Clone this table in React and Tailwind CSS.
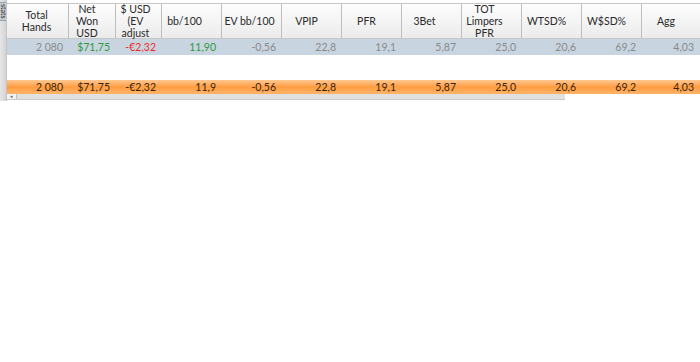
const cols = [
  { w: 'w-[62px]', head: ['Total', 'Hands'], hp: 'pl-[8px] pr-[10px]' },
  { w: 'w-[47px]', head: ['Net', 'Won', 'USD'], hp: 'pl-[2px] pr-[12px]' },
  { w: 'w-[46px]', head: ['$ USD', '(EV', 'adjust'], hp: 'pl-[4px] pr-[10px]' },
  { w: 'w-[60px]', head: ['bb/100'], hp: 'pr-[14px]' },
  { w: 'w-[60px]', head: ['EV bb/100'], hp: 'pl-[4px] pr-[8px]' },
  { w: 'w-[60px]', head: ['VPIP'], hp: 'pl-[2px] pr-[12px]' },
  { w: 'w-[60px]', head: ['PFR'], hp: 'pl-[2px] pr-[12px]' },
  { w: 'w-[60px]', head: ['3Bet'], hp: 'pr-[14px]' },
  { w: 'w-[60px]', head: ['TOT', 'Limpers', 'PFR'], hp: 'pr-[14px]' },
  { w: 'w-[60px]', head: ['WTSD%'], hp: 'pl-[2px] pr-[12px]' },
  { w: 'w-[60px]', head: ['W$SD%'], hp: 'pl-[2px] pr-[12px]' },
  { w: 'w-[58px]', head: ['Agg'], hp: 'pl-[2px] pr-[12px]' },
]

const rowStats = [
  { v: '2 080', c: 'text-[#8a8a8a]' },
  { v: '$71,75', c: 'text-[#2f9a3a]' },
  { v: '-€2,32', c: 'text-[#ee2a2a]' },
  { v: '11,90', c: 'text-[#2f9a3a]' },
  { v: '-0,56', c: 'text-[#8a8a8a]' },
  { v: '22,8', c: 'text-[#8a8a8a]' },
  { v: '19,1', c: 'text-[#8a8a8a]' },
  { v: '5,87', c: 'text-[#8a8a8a]' },
  { v: '25,0', c: 'text-[#8a8a8a]' },
  { v: '20,6', c: 'text-[#8a8a8a]' },
  { v: '69,2', c: 'text-[#8a8a8a]' },
  { v: '4,03', c: 'text-[#8a8a8a]' },
]

const totals = ['2 080', '$71,75', '-€2,32', '11,9', '-0,56', '22,8', '19,1', '5,87', '25,0', '20,6', '69,2', '4,03']

export default function App() {
  return (
    <div
      className="flex w-[700px] h-[362px] bg-white overflow-hidden text-[10.5px] leading-[12px]"
      style={{ fontFamily: 'Lato, "Liberation Sans", sans-serif' }}
    >
      {/* side tab strip */}
      <div className="w-[7px] h-[101px] shrink-0 bg-gradient-to-r from-[#e6e6e6] to-[#d4d4d4] border-r border-[#c4c4c4] pt-[2px]">
        <div className="h-[19px] bg-[#c9cdd4] border-y border-[#9aa0aa] flex items-center justify-center overflow-hidden">
          <span className="[writing-mode:vertical-rl] text-[7px] leading-[7px] text-[#222]">stats</span>
        </div>
      </div>

      <div className="flex flex-col flex-1 pt-[3px]">
        {/* header */}
        <div className="flex h-[36px] border-t border-b border-[#c6c6c6] bg-gradient-to-b from-[#fdfdfd] to-[#ebebeb]">
          {cols.map((c, i) => (
            <div
              key={i}
              className={`${c.w} ${c.hp} shrink-0 flex flex-col items-center justify-center text-center whitespace-nowrap text-[#2a2a2a] ${i < cols.length - 1 ? 'border-r border-[#bdbdbd]' : ''}`}
            >
              {c.head.map((h) => (
                <span key={h}>{h}</span>
              ))}
            </div>
          ))}
        </div>

        {/* stats row */}
        <div className="flex h-[16px] bg-[#c8d5e1] items-center">
          {cols.map((c, i) => (
            <div key={i} className={`${c.w} shrink-0 text-right pr-[6px] whitespace-nowrap ${rowStats[i].c}`}>
              {rowStats[i].v}
            </div>
          ))}
        </div>

        <div className="h-[25px]" />

        {/* totals row */}
        <div className="flex h-[14px] items-center bg-gradient-to-b from-[#ffc890] via-[#ff9d40] to-[#ffb468] text-[#3a2408]">
          {cols.map((c, i) => (
            <div key={i} className={`${c.w} shrink-0 text-right pr-[6px] whitespace-nowrap`}>
              {totals[i]}
            </div>
          ))}
        </div>

        {/* horizontal scrollbar */}
        <div className="flex w-[558px] h-[6px] bg-[#e0e0e0] border-b border-[#cacaca]">
          <div className="w-[10px] h-full bg-[#f2f2f2] border-r border-[#c0c0c0] flex items-center justify-center">
            <span className="text-[5px] leading-[5px] text-[#666]">◂</span>
          </div>
        </div>
      </div>
    </div>
  )
}
